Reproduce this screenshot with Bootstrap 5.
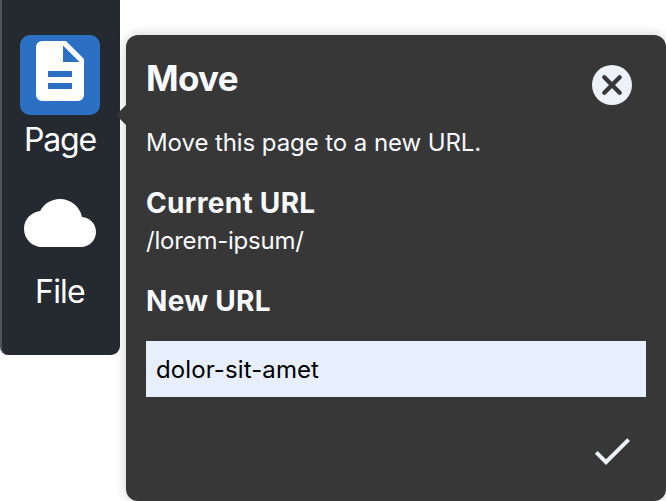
<!DOCTYPE html>
<html lang="en">
<head>
<meta charset="utf-8">
<title>Move page</title>
<link href="https://cdn.jsdelivr.net/npm/bootstrap@5.3.0/dist/css/bootstrap.min.css" rel="stylesheet">
<style>
body{font-family:Inter,"Liberation Sans",sans-serif;background:#fff;height:501px;overflow:hidden}
.sidebar{width:120px;height:355px;background:#252a31;border-left:2px solid #50555a;border-radius:0 0 9px 8px;padding:35px 0 0;margin-right:6px}
.tool{width:118px;height:152px;color:#fff;font-size:32px;line-height:42px;padding-right:2px}
.tool-icon{width:80px;height:80px;border-radius:10px;margin-bottom:4px}
.tool.active .tool-icon{background:#2c70c3}
.tool-icon svg{width:72px;height:72px;display:block;margin:0 auto}
.t-page{letter-spacing:-1.2px}
.t-file{letter-spacing:-.8px}
.panel{width:540px;height:466px;margin-top:35px;background:#373737;border-radius:12px;color:#f8fafd;padding:20px;box-shadow:0 0 12px rgba(0,0,0,.2);font-size:24px;line-height:30px}
.panel::before{content:"";position:absolute;left:-10px;top:70px;border:10px solid transparent;border-left:0;border-right-color:#373737}
.panel h1{font-size:35px;line-height:46px;letter-spacing:-.7px}
.panel h2{font-size:28px;line-height:34px;letter-spacing:.3px}
.close-btn{width:40px;height:40px;margin:10px 14px 0 0}
.intro{margin-top:23px;letter-spacing:-.08px}
.current{margin-top:28px}
.path{margin-top:6px;letter-spacing:-.22px}
.new-label{margin-top:28px}
.url-field{height:56px;background:#e7effd;color:#000;font-size:24px;padding:0 10px;margin-top:23px;letter-spacing:.1px}
.url-field:focus{background:#e7effd;box-shadow:none}
.confirm{margin:30px 10px 0 0}
</style>
<script src="https://cdn.jsdelivr.net/npm/bootstrap@5.3.0/dist/js/bootstrap.bundle.min.js"></script>
</head>
<body class="d-flex align-items-start">
<nav class="sidebar flex-shrink-0 d-flex flex-column">
  <a class="tool active d-flex flex-column align-items-center text-decoration-none" href="#">
    <span class="tool-icon"><svg viewBox="0 0 24 24" fill="#fff"><path fill-rule="evenodd" d="M13 9h5.5L13 3.5V9M6 2h8l6 6v12a2 2 0 0 1-2 2H6a2 2 0 0 1-2-2V4a2 2 0 0 1 2-2M8 12v2h8v-2H8M8 16v2h8v-2H8z"/></svg></span>
    <span class="t-page">Page</span>
  </a>
  <a class="tool d-flex flex-column align-items-center text-decoration-none" href="#">
    <span class="tool-icon"><svg viewBox="0 0 24 24" fill="#fff"><path d="M19.35 10.04C18.67 6.59 15.64 4 12 4 9.11 4 6.6 5.64 5.35 8.04 2.34 8.36 0 10.91 0 14c0 3.31 2.69 6 6 6h13c2.76 0 5-2.24 5-5 0-2.64-2.05-4.78-4.65-4.96z"/></svg></span>
    <span class="t-file">File</span>
  </a>
</nav>
<main class="panel flex-shrink-0 position-relative">
  <header class="d-flex justify-content-between align-items-start">
    <h1 class="fw-bold mb-0">Move</h1>
    <button class="close-btn btn p-0 border-0 d-flex" aria-label="Close"><svg width="40" height="40" viewBox="0 0 40 40"><circle cx="20" cy="20" r="20" fill="#edf1f8"/><path d="M12.3 12.3l15.4 15.4M27.7 12.3L12.3 27.7" stroke="#373737" stroke-width="4.3" stroke-linecap="round"/></svg></button>
  </header>
  <p class="intro mb-0">Move this page to a new URL.</p>
  <h2 class="current fw-bold mb-0">Current URL</h2>
  <p class="path mb-0">/lorem-ipsum/</p>
  <h2 class="new-label fw-bold mb-0">New URL</h2>
  <input class="url-field form-control rounded-0 border-0" value="dolor-sit-amet" aria-label="New URL">
  <div class="d-flex justify-content-end"><button class="confirm btn p-0 border-0 d-flex" aria-label="Confirm"><svg width="48" height="48" viewBox="0 0 24 24" fill="#edf1f8"><path d="M9 16.17L4.83 12l-1.42 1.41L9 19 21 7l-1.41-1.41z"/></svg></button></div>
</main>
</body>
</html>
